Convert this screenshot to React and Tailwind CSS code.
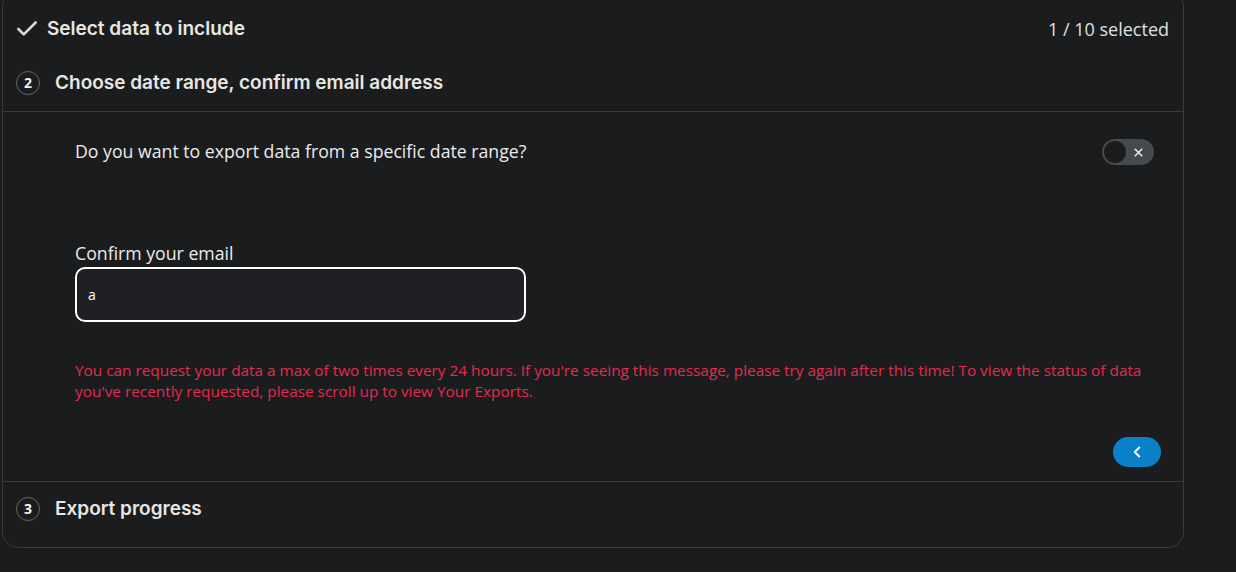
import { Check, X, ChevronLeft } from "lucide-react";

function StepNumber({ n }) {
  return (
    <span className="flex h-[24px] w-[24px] shrink-0 items-center justify-center rounded-full border border-[#6b665f] text-[14px] font-bold leading-none text-[#f2f2f2]">
      {n}
    </span>
  );
}

export default function App() {
  return (
    <div className="min-h-screen bg-[#1b1c1e] text-[#e6e6e6]" style={{ fontFamily: "'Open Sans', sans-serif" }}>
      <div className="ml-[2px] -mt-[10px] w-[1182px] rounded-[16px] border border-[#3a3b3d] bg-[#1b1c1e]">
        {/* Step 1 */}
        <div className="flex items-center justify-between pl-[14px] pr-[14px] pt-[24px] pb-[12px]">
          <div className="-ml-[3px] flex items-center gap-[7px]">
            <Check size={26} strokeWidth={2.4} className="text-[#d8d8d8]" />
            <span className="text-[19px] font-semibold leading-[28px] text-[#e8e6e3]" style={{ fontFamily: "Inter, sans-serif" }}>
              Select data to include
            </span>
          </div>
          <span className="text-[18px] leading-[28px] text-[#e0e0e0]">1 / 10 selected</span>
        </div>

        {/* Step 2 */}
        <div className="flex items-center gap-[15px] pl-[13px] pt-[14px] pb-[14px]">
          <StepNumber n="2" />
          <span className="text-[19px] font-semibold leading-[28px] text-[#e8e6e3]" style={{ fontFamily: "Inter, sans-serif" }}>
            Choose date range, confirm email address
          </span>
        </div>

        <div className="border-t border-[#3a3b3d] pl-[72px] pr-[22px] pt-[25px] pb-[14px]">
          <div className="flex items-center justify-between pr-[7px]">
            <span className="text-[17.7px] leading-[26px] text-[#ececec]">Do you want to export data from a specific date range?</span>
            <button className="mt-[2px] flex h-[26px] w-[52px] items-center justify-between rounded-full bg-[#464a4c] pl-[2px] pr-[9px]">
              <span className="h-[22px] w-[22px] rounded-full bg-[#1b1c1e]" />
              <X size={13} strokeWidth={3} className="text-[#e8e8e8]" />
            </button>
          </div>

          <div className="mt-[75px] text-[17.7px] leading-[26px] text-[#ececec]">Confirm your email</div>
          <div className="mt-[1px] flex h-[55px] w-[451px] items-center rounded-[10px] border-2 border-white bg-[#1f2023] px-[11px] text-[14px] text-white">
            a
          </div>

          <p className="mt-[38px] text-[15.35px] leading-[21px] text-[#e8294e]">
            You can request your data a max of two times every 24 hours. If you're seeing this message, please try again after this time! To view the status of data you've recently requested, please scroll up to view Your Exports.
          </p>

          <div className="mt-[35px] flex justify-end">
            <button className="flex h-[30px] w-[48px] items-center justify-center rounded-full bg-[#0a80c8]">
              <ChevronLeft size={18} strokeWidth={2.5} className="text-white" />
            </button>
          </div>
        </div>

        {/* Step 3 */}
        <div className="flex items-center gap-[15px] border-t border-[#3a3b3d] pl-[13px] pt-[13px] pb-[24px]">
          <StepNumber n="3" />
          <span className="text-[19px] font-semibold leading-[28px] text-[#e8e6e3]" style={{ fontFamily: "Inter, sans-serif" }}>
            Export progress
          </span>
        </div>
      </div>
    </div>
  );
}
